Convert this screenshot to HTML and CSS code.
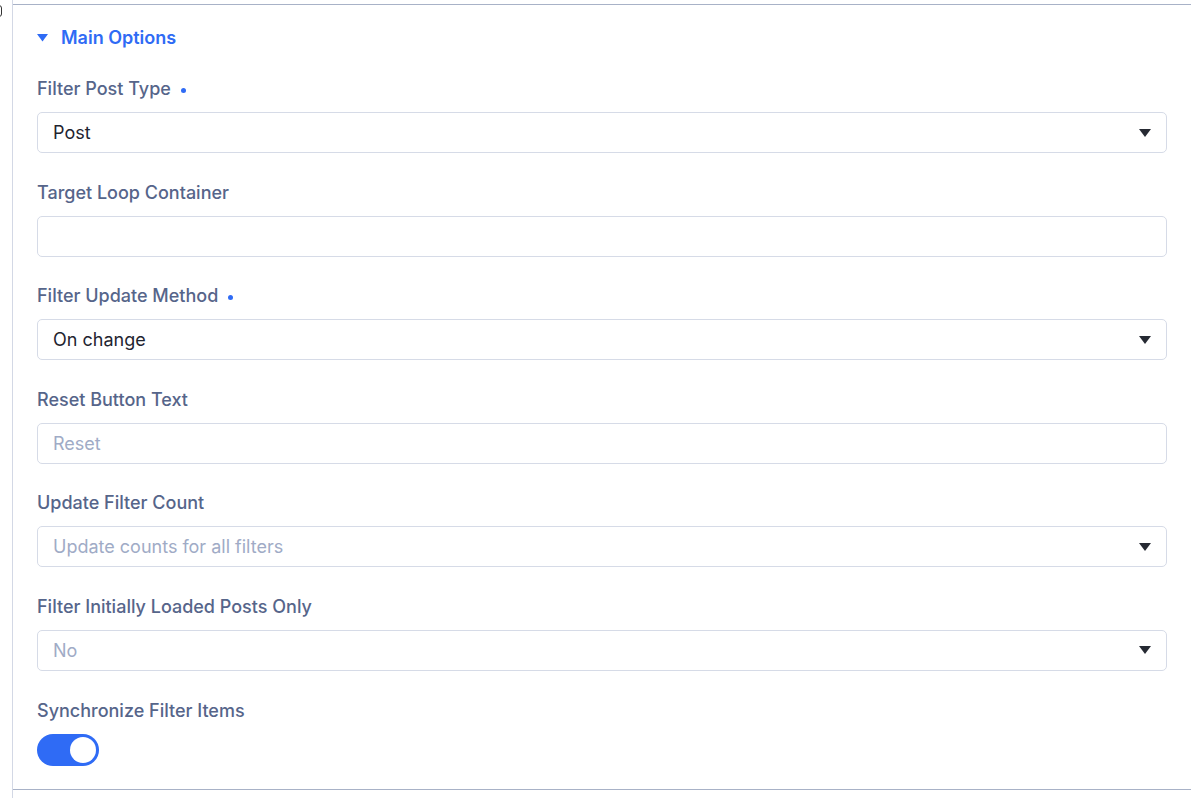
FILE: index.html
```html
<!DOCTYPE html>
<html lang="en">
<head>
  <meta charset="UTF-8">
  <meta name="viewport" content="width=device-width, initial-scale=1.0">
  <title>Filter Settings</title>
  <link rel="stylesheet" href="styles.css">
</head>
<body>
  <div class="edge-mark"></div>
  <div class="column">
    <section class="panel">
      <h3 class="panel-title">
        <svg class="panel-caret" width="11" height="8" viewBox="0 0 11 8"><path d="M0 0h11L5.5 7.5z" fill="currentColor"/></svg>
        Main Options
      </h3>

      <div class="field">
        <label class="field-label">Filter Post Type <span class="req"></span></label>
        <div class="control select">
          <span class="value">Post</span>
          <svg class="arrow" width="12" height="8" viewBox="0 0 12 8"><path d="M0 0h12L6 8z" fill="currentColor"/></svg>
        </div>
      </div>

      <div class="field">
        <label class="field-label">Target Loop Container</label>
        <div class="control"></div>
      </div>

      <div class="field">
        <label class="field-label">Filter Update Method <span class="req"></span></label>
        <div class="control select">
          <span class="value">On change</span>
          <svg class="arrow" width="12" height="8" viewBox="0 0 12 8"><path d="M0 0h12L6 8z" fill="currentColor"/></svg>
        </div>
      </div>

      <div class="field">
        <label class="field-label">Reset Button Text</label>
        <div class="control">
          <span class="value placeholder">Reset</span>
        </div>
      </div>

      <div class="field">
        <label class="field-label">Update Filter Count</label>
        <div class="control select">
          <span class="value placeholder">Update counts for all filters</span>
          <svg class="arrow" width="12" height="8" viewBox="0 0 12 8"><path d="M0 0h12L6 8z" fill="currentColor"/></svg>
        </div>
      </div>

      <div class="field">
        <label class="field-label">Filter Initially Loaded Posts Only</label>
        <div class="control select">
          <span class="value placeholder">No</span>
          <svg class="arrow" width="12" height="8" viewBox="0 0 12 8"><path d="M0 0h12L6 8z" fill="currentColor"/></svg>
        </div>
      </div>

      <div class="field">
        <label class="field-label">Synchronize Filter Items</label>
        <div class="toggle on"><span class="knob"></span></div>
      </div>
    </section>
  </div>
</body>
</html>
```

FILE: styles.css
```css
:root {
  --blue: #2f6bf5;
  --label: #56658a;
  --text: #1f2430;
  --muted: #a0abc6;
  --line: #d6dbe7;
}
* {
  box-sizing: border-box;
  margin: 0;
  padding: 0;
}
body {
  font-family: Inter, 'Noto Sans', sans-serif;
  background: #fff;
  color: var(--text);
  overflow: hidden;
}
.edge-mark {
  position: absolute;
  left: -6px;
  top: 5px;
  width: 8px;
  height: 12px;
  border: 1.5px solid #333;
  border-radius: 3px;
}
.column {
  margin-left: 12px;
  border-left: 1px solid #d3d8e5;
  min-height: 798px;
  padding-top: 4px;
}
.panel {
  border-top: 1px solid #a8b2c7;
  border-bottom: 1px solid #a8b2c7;
  padding: 22px 24px 23px 24px;
}
.panel-title {
  display: flex;
  align-items: center;
  gap: 13px;
  color: var(--blue);
  font-size: 18px;
  font-weight: 600;
  line-height: 22px;
  margin-bottom: 29px;
}
.panel-caret {
  margin-top: -1px;
}
.field {
  margin-bottom: 28.6px;
}
.field:last-child {
  margin-bottom: 0;
}
.field-label {
  display: flex;
  align-items: center;
  gap: 10px;
  font-size: 18px;
  font-weight: 500;
  line-height: 22px;
  color: var(--label);
  margin-bottom: 12px;
}
.req {
  width: 5px;
  height: 5px;
  border-radius: 50%;
  background: var(--blue);
  margin-top: 2px;
}
.control {
  height: 41px;
  border: 1px solid var(--line);
  border-radius: 5px;
  display: flex;
  align-items: center;
  justify-content: space-between;
  padding: 0 15px;
  background: #fff;
}
.value {
  font-size: 18px;
  color: var(--text);
}
.value.placeholder {
  color: var(--muted);
}
.arrow {
  color: #262a33;
}
.toggle {
  width: 62px;
  height: 32px;
  border-radius: 16px;
  background: #c9d0de;
  position: relative;
}
.toggle.on {
  background: var(--blue);
}
.knob {
  position: absolute;
  top: 3px;
  right: 3px;
  width: 26px;
  height: 26px;
  border-radius: 50%;
  background: #fff;
}
```
